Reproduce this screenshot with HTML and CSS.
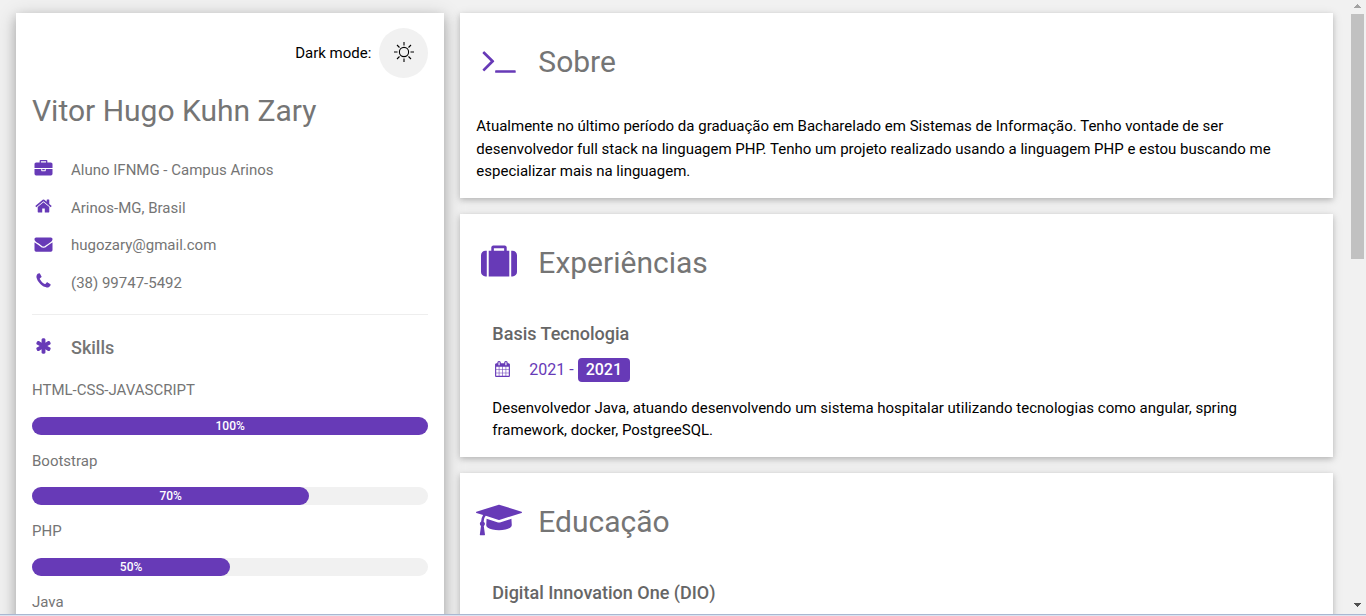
FILE: index.html
```html
<!DOCTYPE html>
<html lang="pt-BR">
<head>
<meta charset="utf-8">
<title>Vitor Hugo Kuhn Zary</title>
<link rel="stylesheet" href="styles.css">
</head>
<body>
<div class="window">
  <main class="page">
    <aside class="side">
      <div class="card card-side">
        <div class="mode">
          <label for="mode-toggle">Dark mode:</label>
          <button id="mode-toggle" class="mode-button" type="button">
            <svg class="sun" viewBox="0 0 20 20" aria-hidden="true"><circle cx="10" cy="10" r="4.600"/><path d="M10 0v3.500M10 16.500V20M0 10h3.500M16.500 10H20M3 3l2.500 2.500M14.500 14.500L17 17M3 17l2.500-2.500M14.500 5.500L17 3"/></svg>
          </button>
        </div>
        <h2 class="name">Vitor Hugo Kuhn Zary</h2>
        <ul class="facts">
          <li class="fact"><svg class="icon icon-large" viewBox="0 0 1792 1792" aria-hidden="true"><path d="M640 256h512v-128h-512v128zm1152 640v480q0 66-47 113t-113 47h-1472q-66 0-113-47t-47-113v-480h672v160q0 26 19 45t45 19h320q26 0 45-19t19-45v-160h672zm-768 0v128h-256v-128h256zm768-480v384h-1792v-384q0-66 47-113t113-47h352v-160q0-40 28-68t68-28h576q40 0 68 28t28 68v160h352q66 0 113 47t47 113z"/></svg>Aluno IFNMG - Campus Arinos</li>
          <li class="fact"><svg class="icon icon-large" viewBox="0 0 1792 1792" aria-hidden="true"><path d="M1472 992v480q0 26-19 45t-45 19h-384v-384h-256v384h-384q-26 0-45-19t-19-45v-480q0-1 .5-3t.5-3l575-474 575 474q1 2 1 6zm223-69l-62 74q-8 9-21 11h-3q-13 0-21-7l-692-577-692 577q-12 8-24 7-13-2-21-11l-62-74q-8-10-7-23.500t11-21.500l719-599q32-26 76-26t76 26l244 204v-195q0-14 9-23t23-9h192q14 0 23 9t9 23v408l219 182q10 8 11 21.500t-7 23.500z"/></svg>Arinos-MG, Brasil</li>
          <li class="fact"><svg class="icon icon-large" viewBox="0 0 1792 1792" aria-hidden="true"><path d="M1792 710v794q0 66-47 113t-113 47h-1472q-66 0-113-47t-47-113v-794q44 49 101 87 362 246 497 345 57 42 92.500 65.500t94.500 48 110 24.500h2q51 0 110-24.500t94.500-48 92.500-65.500q170-123 498-345 57-39 100-87zm0-294q0 79-49 151t-122 123q-376 261-468 325-10 7-42.500 31t-54 38.500-52 32.500-57.500 27-50 9h-2q-23 0-50-9t-57.500-27-52-32.500-54-38.500-42.500-31q-91-64-262-182.500t-205-142.500q-62-42-117-115.500t-55-136.500q0-78 41.500-130t118.500-52h1472q65 0 112.500 47t47.500 113z"/></svg>hugozary@gmail.com</li>
          <li class="fact"><svg class="icon icon-large" viewBox="0 0 1792 1792" aria-hidden="true"><path d="M1600 1240q0 27-10 70.500t-21 68.500q-21 50-122 106-94 51-186 51-27 0-53-3.500t-57.500-12.500-47-14.500-55.500-20.500-49-18q-98-35-175-83-127-79-264-216t-216-264q-48-77-83-175-3-9-18-49t-20.500-55.500-14.500-47-12.500-57.500-3.500-53q0-92 51-186 56-101 106-122 25-11 68.500-21t70.500-10q14 0 21 3 18 6 53 76 11 19 30 54t35 63.500 31 53.500q3 4 17.500 25t21.500 35.500 7 28.500q0 20-28.500 50t-62 55-62 53-28.500 46q0 9 5 22.500t8.500 20.500 14 24 11.500 19q76 137 174 235t235 174q2 1 19 11.500t24 14 20.500 8.500 22.500 5q18 0 46-28.500t53-62 55-62 50-28.500q14 0 28.500 7t35.500 21.500 25 17.500q25 15 53.500 31t63.500 35 54 30q70 35 76 53 3 7 3 21z"/></svg>(38) 99747-5492</li>
        </ul>
        <hr class="rule">
        <h3 class="skills-title"><svg class="icon icon-large" viewBox="0 0 1792 1792" aria-hidden="true"><path d="M1546 1050q46 26 59.500 77.500t-12.500 97.500l-64 110q-26 46-77.500 59.500t-97.500-12.500l-266-153v307q0 52-38 90t-90 38h-128q-52 0-90-38t-38-90v-307l-266 153q-46 26-97.500 12.500t-77.500-59.500l-64-110q-26-46-12.500-97.500t59.500-77.500l266-154-266-154q-46-26-59.500-77.500t12.500-97.500l64-110q26-46 77.500-59.500t97.500 12.500l266 153v-307q0-52 38-90t90-38h128q52 0 90 38t38 90v307l266-153q46-26 97.500-12.500t77.500 59.500l64 110q26 46 12.500 97.500t-59.500 77.500l-266 154z"/></svg>Skills</h3>
        <div class="skills">
          <p>HTML-CSS-JAVASCRIPT</p>
          <div class="bar"><div class="bar-fill" style="width:100%">100%</div></div>
          <p>Bootstrap</p>
          <div class="bar"><div class="bar-fill" style="width:70%">70%</div></div>
          <p>PHP</p>
          <div class="bar"><div class="bar-fill" style="width:50%">50%</div></div>
          <p>Java</p>
        </div>
      </div>
    </aside>
    <div class="content">
      <section class="card">
        <h2 class="title"><svg class="icon icon-title" viewBox="0 0 1792 1792" aria-hidden="true"><path d="M649 983l-466 466q-10 10-23 10t-23-10l-50-50q-10-10-10-23t10-23l393-393-393-393q-10-10-10-23t10-23l50-50q10-10 23-10t23 10l466 466q10 10 10 23t-10 23zm1079 457v64q0 14-9 23t-23 9h-960q-14 0-23-9t-9-23v-64q0-14 9-23t23-9h960q14 0 23 9t9 23z"/></svg>Sobre</h2>
        <p>Atualmente no último período da graduação em Bacharelado em Sistemas de Informação. Tenho vontade de ser desenvolvedor full stack na linguagem PHP. Tenho um projeto realizado usando a linguagem PHP e estou buscando me especializar mais na linguagem.</p>
      </section>
      <section class="card">
        <h2 class="title"><svg class="icon icon-title" viewBox="0 0 1792 1792" aria-hidden="true"><path d="M640 384h512v-128h-512v128zm-352 0v1280h-64q-92 0-158-66t-66-158v-832q0-92 66-158t158-66h64zm1120 0v1280h-1024v-1280h128v-160q0-40 28-68t68-28h576q40 0 68 28t28 68v160h128zm384 224v832q0 92-66 158t-158 66h-64v-1280h64q92 0 158 66t66 158z"/></svg>Experiências</h2>
        <article class="entry">
          <h3 class="entry-title">Basis Tecnologia</h3>
          <p class="dates"><svg class="icon icon-date" viewBox="0 0 1792 1792" aria-hidden="true"><path d="M192 1664h288v-288h-288v288zm352 0h320v-288h-320v288zm-352-352h288v-320h-288v320zm352 0h320v-320h-320v320zm-352-384h288v-288h-288v288zm736 736h320v-288h-320v288zm-384-736h320v-288h-320v288zm768 736h288v-288h-288v288zm-384-352h320v-320h-320v320zm-352-864v-288q0-13-9.500-22.500t-22.500-9.500h-64q-13 0-22.500 9.500t-9.500 22.500v288q0 13 9.500 22.500t22.500 9.500h64q13 0 22.500-9.500t9.500-22.500zm736 864h288v-320h-288v320zm-384-384h320v-288h-320v288zm384 0h288v-288h-288v288zm32-480v-288q0-13-9.500-22.500t-22.500-9.500h-64q-13 0-22.500 9.500t-9.500 22.500v288q0 13 9.500 22.500t22.500 9.500h64q13 0 22.500-9.500t9.500-22.500zm384-64v1280q0 52-38 90t-90 38h-1408q-52 0-90-38t-38-90v-1280q0-52 38-90t90-38h128v-96q0-66 47-113t113-47h64q66 0 113 47t47 113v96h384v-96q0-66 47-113t113-47h64q66 0 113 47t47 113v96h128q52 0 90 38t38 90z"/></svg><span>2021 - <span class="tag">2021</span></span></p>
          <p>Desenvolvedor Java, atuando desenvolvendo um sistema hospitalar utilizando tecnologias como angular, spring framework, docker, PostgreeSQL.</p>
        </article>
      </section>
      <section class="card">
        <h2 class="title"><svg class="icon icon-title" viewBox="0 0 2304 1792" aria-hidden="true"><path d="M1774 836l18 316q4 69-82 128t-235 93.500-323 34.500-323-34.500-235-93.500-82-128l18-316 574 181q22 7 48 7t48-7zM2304 512q0 23-22 31l-1120 352q-4 1-10 1t-10-1l-652-206q-43 34-71 111.500t-34 178.500q63 36 63 109 0 69-58 107l58 433q2 14-8 25-9 11-24 11h-192q-15 0-24-11-10-11-8-25l58-433q-58-38-58-107 0-73 65-111 11-207 98-330l-333-104q-22-8-22-31t22-31l1120-352q4-1 10-1t10 1l1120 352q22 8 22 31z"/></svg>Educação</h2>
        <article class="entry">
          <h3 class="entry-title">Digital Innovation One (DIO)</h3>
        </article>
      </section>
    </div>
  </main>
  <div class="scrollbar" aria-hidden="true">
    <svg class="arrow arrow-up" viewBox="0 0 7 4"><path d="M3 0h1v1h1v1h1v1h1v1H0V3h1V2h1V1h1z"/></svg>
    <div class="track"><div class="thumb"></div></div>
    <svg class="arrow" viewBox="0 0 7 4"><path d="M0 0h7v1H6v1H5v1H4v1H3V3H2V2H1V1H0z"/></svg>
  </div>
</div>
<div class="window-edge"></div>
</body>
</html>
```
FILE: styles.css
```css
* {
  box-sizing: border-box;
}

body {
  display: flex;
  flex-direction: column;
  height: 100vh;
  margin: 0;
  background: #f1f1f1;
  color: #000;
  font: 15px/1.5 Roboto, "Liberation Sans", sans-serif;
}

h2, h3, p, ul {
  margin: 0;
  padding: 0;
}

.window {
  flex: 1;
  display: flex;
  min-height: 0;
  overflow: hidden;
}

.window-edge {
  height: 2px;
  border-top: 1px solid #a9b7d1;
  background: #d9e4f1;
}

.page {
  flex: 1;
  display: grid;
  grid-template-columns: minmax(0, 1fr) minmax(0, 2fr);
  align-items: start;
  padding: 13px 8px 0;
  overflow: hidden;
}

.side {
  padding: 0 8px;
}

.content {
  display: flex;
  flex-direction: column;
  gap: 16px;
  padding: 0 8px;
}

.card {
  padding: 22px 16px 15px;
  background: #fff;
  box-shadow: 0 2px 5px rgba(0, 0, 0, 0.16), 0 2px 10px rgba(0, 0, 0, 0.12);
}

.card-side {
  padding-top: 15px;
  box-shadow: 0 4px 10px rgba(0, 0, 0, 0.2), 0 4px 20px rgba(0, 0, 0, 0.19);
  color: #757575;
}

.mode {
  display: flex;
  align-items: center;
  justify-content: flex-end;
  gap: 8px;
  color: #000;
}

.mode-button {
  display: flex;
  align-items: center;
  justify-content: center;
  width: 49px;
  height: 50px;
  padding: 0 0 2px;
  border: 0;
  border-radius: 50%;
  background: #f1f1f1;
}

.sun {
  width: 20px;
  height: 20px;
  fill: none;
  stroke: #000;
  stroke-width: 1.1;
}

.name,
.title {
  color: #757575;
  font-size: 30px;
  font-weight: 400;
}

.name {
  margin: 10px 0 26px;
}

.facts {
  display: flex;
  flex-direction: column;
  gap: 15px;
  list-style: none;
}

.fact,
.skills-title,
.title,
.dates {
  display: flex;
  align-items: center;
  gap: 16px;
}

.icon {
  flex: none;
  fill: #673ab7;
}

.icon-large {
  width: 23px;
  height: 18px;
  margin-bottom: 3px;
}

.icon-title {
  width: 46px;
  height: 36px;
  margin-bottom: 3px;
}

.icon-date {
  width: 21px;
  height: 16px;
  margin-bottom: 2px;
}

.rule {
  height: 1px;
  margin: 20px 0 19px;
  border: 0;
  background: #eee;
}

.skills-title,
.entry-title {
  font-size: 18px;
  font-weight: 500;
}

.skills-title {
  margin-bottom: 18px;
}

.skills {
  display: flex;
  flex-direction: column;
  gap: 15px;
}

.bar {
  border-radius: 9px;
  background: #f1f1f1;
}

.bar-fill {
  border-radius: 9px;
  background: #673ab7;
  color: #fff;
  font-size: 12px;
  font-weight: 500;
  text-align: center;
}

.title {
  min-height: 53px;
  margin-bottom: 27px;
}

.entry {
  padding: 4px 16px 0;
}

.entry-title {
  color: #666;
}

.dates {
  margin: 11px 0 15px;
  color: #673ab7;
  font-size: 16px;
}

.tag {
  display: inline-block;
  padding: 0 8px;
  border-radius: 4px;
  background: #673ab7;
  color: #fff;
  font-weight: 500;
}

.scrollbar {
  display: flex;
  flex-direction: column;
  align-items: center;
  width: 17px;
  padding: 4px 0 7px;
  background: #f1f1f1;
}

.arrow {
  width: 7px;
  height: 4px;
  fill: #505050;
}

.arrow-up {
  fill: #a3a3a3;
}

.track {
  flex: 1;
  width: 13px;
  padding: 6px 0;
}

.thumb {
  height: 42%;
  background: #c1c1c1;
}
```
